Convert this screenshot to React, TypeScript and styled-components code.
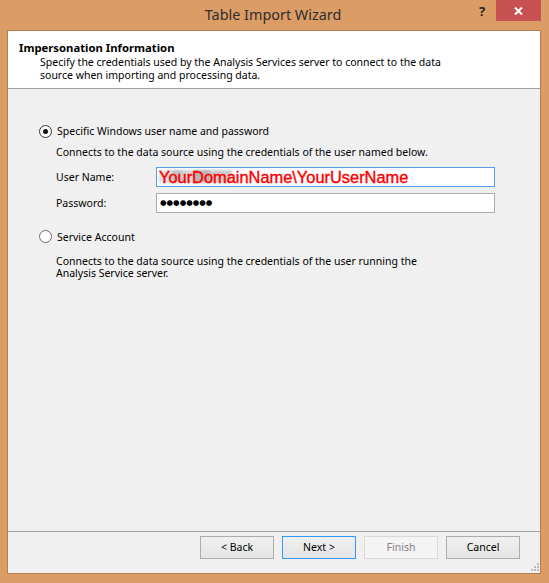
import React from "react";
import styled, { createGlobalStyle } from "styled-components";

const GlobalStyle = createGlobalStyle`
  html, body {
    margin: 0;
    padding: 0;
    background: #dc9c66;
  }
  body {
    font-family: "Noto Sans", "Open Sans", sans-serif;
    font-size: 10.5px;
    color: #000;
  }
`;

const Window = styled.div`
  width: 549px;
  height: 583px;
  box-sizing: border-box;
  background: #dc9c66;
  padding: 0 8px 9px 7px;
  display: flex;
  flex-direction: column;
`;

const TitleBar = styled.div`
  height: 30px;
  display: grid;
  grid-template-columns: 1fr;
`;

const Title = styled.div`
  grid-area: 1 / 1;
  justify-self: center;
  padding-top: 5px;
  padding-right: 2px;
  font-size: 14.4px;
  color: #2e2e2e;
`;

const Controls = styled.div`
  grid-area: 1 / 1;
  justify-self: end;
  display: flex;
  align-items: flex-start;
  height: 21px;
`;

const HelpButton = styled.div`
  width: 26px;
  height: 21px;
  display: flex;
  align-items: center;
  justify-content: center;
  font-size: 13px;
  font-weight: 700;
  color: #262626;
  margin-right: 1px;
`;

const CloseButton = styled.div`
  width: 45px;
  height: 21px;
  background: #c75050;
  display: flex;
  align-items: center;
  justify-content: center;
`;

const Client = styled.div`
  flex: 1;
  border: 1px solid #b37f50;
  background: #f0f0f0;
  display: flex;
  flex-direction: column;
`;

const Header = styled.div`
  height: 58px;
  box-sizing: border-box;
  background: #fff;
  border-bottom: 1px solid #a0a0a0;
  padding: 9px 0 0 11px;
`;

const Heading = styled.div`
  font-size: 11.3px;
  font-weight: 700;
  line-height: 16px;
`;

const HeaderText = styled.div`
  margin-left: 21px;
  line-height: 13px;
  width: 410px;
`;

const Body = styled.div`
  flex: 1;
  padding: 34px 0 0 31px;
`;

const Option = styled.label`
  display: flex;
  align-items: center;
  gap: 5px;
  height: 16px;
`;

const Radio = styled.span<{ $checked?: boolean }>`
  width: 13px;
  height: 13px;
  box-sizing: border-box;
  border-radius: 50%;
  border: 1px solid ${(p) => (p.$checked ? "#333" : "#6d6d6d")};
  background: #fff;
  display: flex;
  align-items: center;
  justify-content: center;
  &::after {
    content: "";
    width: 5px;
    height: 5px;
    border-radius: 50%;
    background: ${(p) => (p.$checked ? "#111" : "transparent")};
  }
`;

const Section = styled.div<{ $top: number }>`
  margin: ${(p) => p.$top}px 0 0 17px;
`;

const Note = styled.div<{ $width: number }>`
  line-height: 12.5px;
  width: ${(p) => p.$width}px;
`;

const Fields = styled.div`
  display: grid;
  grid-template-columns: 100px 339px;
  row-gap: 6px;
  margin-top: 8px;
  margin-bottom: 16px;
`;

const FieldLabel = styled.div`
  display: flex;
  align-items: center;
  padding-top: 1px;
`;

const TextBox = styled.div<{ $focused?: boolean }>`
  position: relative;
  height: 20px;
  box-sizing: border-box;
  background: #fff;
  border: 1px solid ${(p) => (p.$focused ? "#569de5" : "#abadb3")};
  display: flex;
  align-items: center;
  padding-left: 2px;
  overflow: hidden;
`;

// blurred leftover of the original account name under the red overlay
const Smudge = styled.span`
  position: absolute;
  left: 2px;
  top: 2px;
  width: 73px;
  height: 13px;
  background: linear-gradient(
    90deg,
    #d8d8d8 0 18%,
    #b8b8b8 18% 32%,
    #cfcfcf 32% 48%,
    #a9a9a9 48% 70%,
    #c4c4c4 70% 100%
  );
  filter: blur(1px);
  opacity: 0.85;
`;

const RedValue = styled.span`
  position: relative;
  font-family: "Liberation Sans", Arial, sans-serif;
  font-size: 16.4px;
  color: #ff0000;
  line-height: 18px;
  -webkit-text-stroke: 0.4px #ff0000;
`;

const Mask = styled.span`
  font-family: "DejaVu Sans", sans-serif;
  font-size: 7.5px;
  color: #000;
  padding-left: 1px;
`;

const Footer = styled.div`
  height: 42px;
  box-sizing: border-box;
  border-top: 1px solid #a0a0a0;
  display: flex;
  justify-content: flex-end;
  align-items: flex-start;
  gap: 8px;
  padding: 4px 20px 0 0;
  position: relative;
`;

const Button = styled.div<{ $default?: boolean; $disabled?: boolean }>`
  width: 74px;
  height: 23px;
  box-sizing: border-box;
  display: flex;
  align-items: center;
  justify-content: center;
  border: 1px solid
    ${(p) => (p.$default ? "#3399ff" : p.$disabled ? "#d9d9d9" : "#acacac")};
  background: ${(p) =>
    p.$disabled ? "#f4f4f4" : "linear-gradient(#f0f0f0, #e5e5e5)"};
  color: ${(p) => (p.$disabled ? "#838383" : "#000")};
  font-size: 10.5px;
  padding-bottom: 1px;
`;

const Grip = styled.svg`
  position: absolute;
  right: 1px;
  bottom: 2px;
`;

export default function App() {
  return (
    <>
      <GlobalStyle />
      <Window>
        <TitleBar>
          <Title>Table Import Wizard</Title>
          <Controls>
            <HelpButton>?</HelpButton>
            <CloseButton>
              <svg width="9" height="8" viewBox="0 0 9 8">
                <path d="M1 0.5 L8 7.5 M8 0.5 L1 7.5" stroke="#fff" strokeWidth="2" />
              </svg>
            </CloseButton>
          </Controls>
        </TitleBar>
        <Client>
          <Header>
            <Heading>Impersonation Information</Heading>
            <HeaderText>
              Specify the credentials used by the Analysis Services server to connect to the data
              source when importing and processing data.
            </HeaderText>
          </Header>
          <Body>
            <Option>
              <Radio $checked />
              Specific Windows user name and password
            </Option>
            <Section $top={7}>
              <Note $width={420}>
                Connects to the data source using the credentials of the user named below.
              </Note>
              <Fields>
                <FieldLabel>User Name:</FieldLabel>
                <TextBox $focused>
                  <Smudge />
                  <RedValue>YourDomainName\YourUserName</RedValue>
                </TextBox>
                <FieldLabel>Password:</FieldLabel>
                <TextBox>
                  <Mask>●●●●●●●●</Mask>
                </TextBox>
              </Fields>
            </Section>
            <Option>
              <Radio />
              Service Account
            </Option>
            <Section $top={10}>
              <Note $width={372}>
                Connects to the data source using the credentials of the user running the
                Analysis Service server.
              </Note>
            </Section>
          </Body>
          <Footer>
            <Button>&lt; Back</Button>
            <Button $default>Next &gt;</Button>
            <Button $disabled>Finish</Button>
            <Button>Cancel</Button>
            <Grip width="8" height="8" viewBox="0 0 8 8">
              <rect x="6" y="0" width="2" height="2" fill="#b9b9b9" />
              <rect x="3" y="3" width="2" height="2" fill="#b9b9b9" />
              <rect x="6" y="3" width="2" height="2" fill="#b9b9b9" />
              <rect x="0" y="6" width="2" height="2" fill="#b9b9b9" />
              <rect x="3" y="6" width="2" height="2" fill="#b9b9b9" />
              <rect x="6" y="6" width="2" height="2" fill="#b9b9b9" />
            </Grip>
          </Footer>
        </Client>
      </Window>
    </>
  );
}
